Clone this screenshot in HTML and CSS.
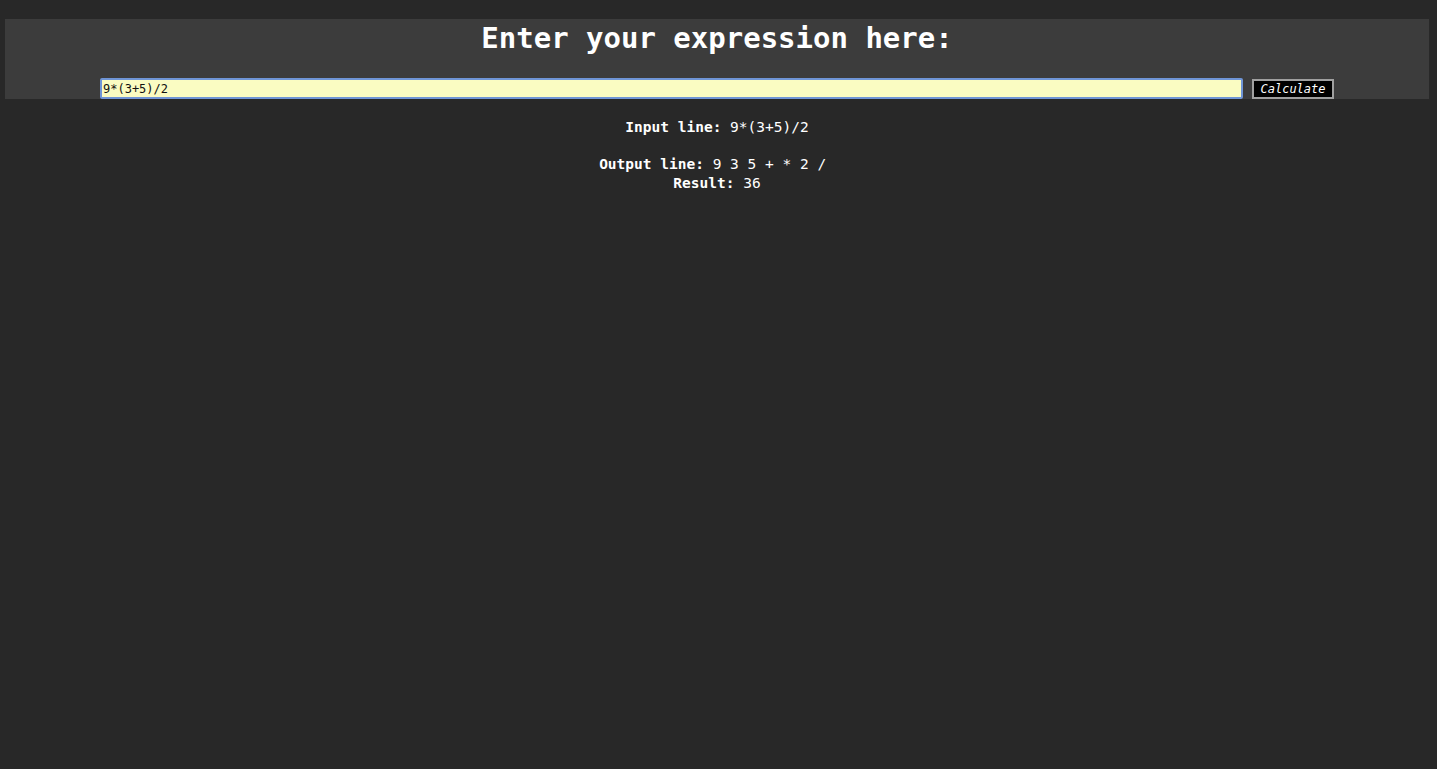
FILE: index.html
```html
<!DOCTYPE html>
<html>
<head>
<meta charset="utf-8">
<link rel="stylesheet" href="styles.css">
</head>
<body>
<div class="panel">
  <h1 class="title">Enter your expression here:</h1>
  <form class="form">
    <input class="expr" type="text" value="9*(3+5)/2">
    <button class="calc" type="button">Calculate</button>
  </form>
</div>
<div class="results">
  <div class="line"><b>Input line:</b> 9*(3+5)/2</div>
  <div class="line gap"><b>Output line:</b> 9 3 5 + * 2 /&nbsp;</div>
  <div class="line"><b>Result:</b> 36</div>
</div>
</body>
</html>
```
FILE: styles.css
```css
html, body {
  margin: 0;
  padding: 0;
  background: #282828;
}
body {
  padding: 19px 8px 0 5px;
  font-family: "DejaVu Sans Mono", "Liberation Mono", monospace;
  color: #ffffff;
}
.panel {
  background: #3c3c3c;
  height: 80px;
  display: flex;
  flex-direction: column;
  align-items: center;
}
.title {
  margin: 0;
  padding-top: 1px;
  height: 37px;
  font-size: 29px;
  line-height: 37px;
  font-weight: bold;
  color: #ffffff;
}
.form {
  margin-top: 21px;
  display: flex;
  align-items: flex-start;
  width: 100%;
  padding-left: 95px;
  box-sizing: border-box;
}
.expr {
  box-sizing: border-box;
  width: 1143px;
  height: 21px;
  margin: 0;
  padding: 0 1px;
  border: 2px solid #6f95d6;
  border-radius: 2px;
  background: #fafcc2;
  font-family: "DejaVu Sans Mono", monospace;
  font-size: 12px;
  color: #111111;
  outline: none;
}
.calc {
  box-sizing: border-box;
  margin-left: 9px;
  margin-top: 1px;
  width: 82px;
  height: 20px;
  padding: 0;
  border: 2px solid #a0a0a0;
  background: #000000;
  color: #ffffff;
  font-family: "DejaVu Sans Mono", monospace;
  font-style: italic;
  font-size: 12px;
}
.results {
  padding-top: 19px;
  text-align: center;
  font-size: 14.5px;
  line-height: 19px;
}
.line b {
  font-weight: bold;
}
.gap {
  margin-top: 18px;
}
```
